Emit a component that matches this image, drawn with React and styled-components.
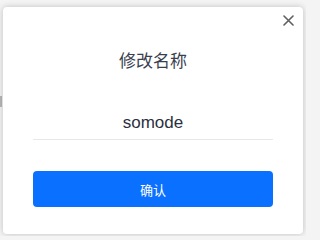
import React, { useState } from 'react';
import styled, { createGlobalStyle } from 'styled-components';

const GlobalStyle = createGlobalStyle`
	html, body {
		margin: 0;
		padding: 0;
		background: #f4f4f4;
		font-family: "Liberation Sans", "Noto Sans CJK SC", sans-serif;
	}
`;

const Backdrop = styled.div`
	position: relative;
	width: 306px;
	height: 236px;
	padding: 7px 3px 2px;
	box-sizing: border-box;
	overflow: hidden;
`;

// tiny bit of the page that peeks out on the left of the dialog
const PageEdge = styled.div`
	position: absolute;
	left: 0;
	top: 96px;
	width: 2px;
	height: 11px;
	background: #b8b8b8;
`;

const Dialog = styled.div`
	position: relative;
	display: flex;
	flex-direction: column;
	align-items: stretch;
	height: 100%;
	padding: 0 30px;
	box-sizing: border-box;
	background: #fff;
	border-radius: 4px;
	box-shadow: 0 0 6px rgba(0, 0, 0, 0.22);
`;

const CloseButton = styled.button`
	position: absolute;
	top: 7px;
	right: 9px;
	display: flex;
	align-items: center;
	justify-content: center;
	width: 12px;
	height: 12px;
	padding: 0;
	border: none;
	background: none;
	cursor: pointer;
`;

const Title = styled.h2`
	margin: 41px 0 0;
	font-size: 17px;
	line-height: 24px;
	font-weight: normal;
	text-align: center;
	color: #3a3f4f;
	font-family: "Noto Sans CJK SC", sans-serif;
`;

const NameInput = styled.input`
	margin-top: 28px;
	height: 40px;
	padding: 6px 0 0;
	box-sizing: border-box;
	border: none;
	border-bottom: 1px solid #e8e8e8;
	outline: none;
	background: transparent;
	text-align: center;
	font-family: "Liberation Sans", sans-serif;
	font-size: 17px;
	color: #2b3040;
`;

const ConfirmButton = styled.button`
	margin-top: 31px;
	height: 36px;
	border: none;
	border-radius: 4px;
	background: #0a70ff;
	color: #fff;
	font-family: "Noto Sans CJK SC", sans-serif;
	font-size: 13px;
	cursor: pointer;
`;

const App = () => {
	const [name, setName] = useState('somode');

	return (
		<React.Fragment>
			<GlobalStyle />
			<Backdrop>
				<PageEdge />
				<Dialog>
					<CloseButton aria-label="close">
						<svg width="11" height="11" viewBox="0 0 11 11">
							<path
								d="M1 1L10 10M10 1L1 10"
								stroke="#5f5f5f"
								strokeWidth="1.6"
								strokeLinecap="round"
							/>
						</svg>
					</CloseButton>
					<Title>修改名称</Title>
					<NameInput value={name} onChange={e => setName(e.target.value)} />
					<ConfirmButton>确认</ConfirmButton>
				</Dialog>
			</Backdrop>
		</React.Fragment>
	);
};

export default App;
